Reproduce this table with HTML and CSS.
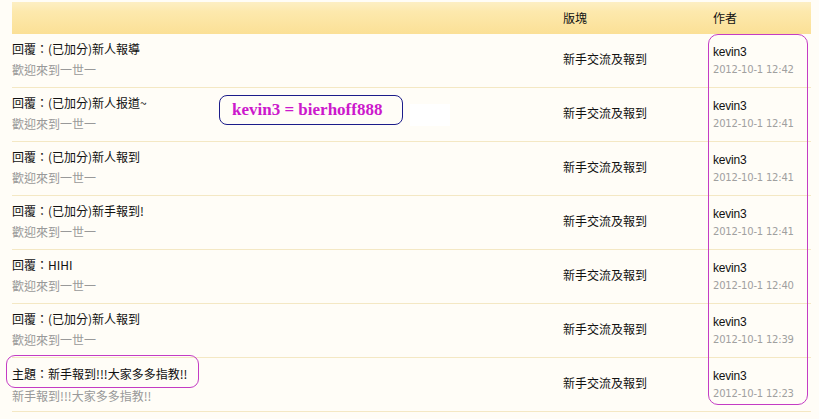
FILE: index.html
```html
<!DOCTYPE html>
<html>
<head>
<meta charset="utf-8">
<link rel="stylesheet" href="styles.css">
</head>
<body>
<div class="page">
  <div class="table">
    <div class="head">
      <div class="c1"></div>
      <div class="c2">版塊</div>
      <div class="c3">作者</div>
    </div>
    <div class="row">
      <div class="c1"><div class="t">回覆：(已加分)新人報導</div><div class="s">歡迎來到一世一</div></div>
      <div class="c2">新手交流及報到</div>
      <div class="c3"><div class="au">kevin3</div><div class="dt">2012-10-1 12:42</div></div>
    </div>
    <div class="row">
      <div class="c1"><div class="t">回覆：(已加分)新人报道~</div><div class="s">歡迎來到一世一</div></div>
      <div class="c2">新手交流及報到</div>
      <div class="c3"><div class="au">kevin3</div><div class="dt">2012-10-1 12:41</div></div>
    </div>
    <div class="row">
      <div class="c1"><div class="t">回覆：(已加分)新人報到</div><div class="s">歡迎來到一世一</div></div>
      <div class="c2">新手交流及報到</div>
      <div class="c3"><div class="au">kevin3</div><div class="dt">2012-10-1 12:41</div></div>
    </div>
    <div class="row">
      <div class="c1"><div class="t">回覆：(已加分)新手報到!</div><div class="s">歡迎來到一世一</div></div>
      <div class="c2">新手交流及報到</div>
      <div class="c3"><div class="au">kevin3</div><div class="dt">2012-10-1 12:41</div></div>
    </div>
    <div class="row">
      <div class="c1"><div class="t">回覆：HIHI</div><div class="s">歡迎來到一世一</div></div>
      <div class="c2">新手交流及報到</div>
      <div class="c3"><div class="au">kevin3</div><div class="dt">2012-10-1 12:40</div></div>
    </div>
    <div class="row">
      <div class="c1"><div class="t">回覆：(已加分)新人報到</div><div class="s">歡迎來到一世一</div></div>
      <div class="c2">新手交流及報到</div>
      <div class="c3"><div class="au">kevin3</div><div class="dt">2012-10-1 12:39</div></div>
    </div>
    <div class="row last">
      <div class="c1"><div class="t">主題：新手報到!!!大家多多指教!!</div><div class="s">新手報到!!!大家多多指教!!</div></div>
      <div class="c2">新手交流及報到</div>
      <div class="c3"><div class="au">kevin3</div><div class="dt">2012-10-1 12:23</div></div>
    </div>
  </div>
  <div class="mark-author"></div>
  <div class="mark-topic"></div>
  <div class="note">kevin3 = bierhoff888</div>
  <div class="patch"></div>
</div>
</body>
</html>
```
FILE: styles.css
```css
html, body {
  margin: 0;
  padding: 0;
  background: #fffdf7;
}
.page {
  position: relative;
  width: 819px;
  height: 419px;
  overflow: hidden;
  font-family: "Noto Sans CJK TC", "Liberation Sans", sans-serif;
  font-size: 12px;
  color: #111;
}
.table {
  margin-left: 12px;
  width: 799px;
  padding-top: 2px;
}
.head, .row {
  display: grid;
  grid-template-columns: 551px 150px 98px;
}
.head {
  height: 31px;
  align-items: center;
  background: linear-gradient(#fdefc4 0%, #fde9ad 30%, #fbe096 100%);
  line-height: 14px;
  padding-bottom: 1px;
}
.row {
  height: 53px;
  border-bottom: 1px solid #f4e8c4;
  box-sizing: content-box;
}
.row .c1 {
  padding-top: 8px;
}
.t {
  line-height: 14px;
  height: 14px;
  white-space: nowrap;
}
.s {
  margin-top: 7px;
  line-height: 14px;
  color: #999;
  white-space: nowrap;
}
.row .c2 {
  align-self: center;
  line-height: 14px;
  margin-top: -3px;
}
.row .c3 {
  padding-top: 11px;
}
.au {
  font-family: "Liberation Sans", sans-serif;
  font-size: 12px;
  line-height: 14px;
  letter-spacing: -0.2px;
}
.dt {
  margin-top: 4px;
  font-family: "DejaVu Sans", sans-serif;
  font-size: 10px;
  line-height: 14px;
  color: #a0a0a0;
  letter-spacing: -0.2px;
}
.row.last .c1 {
  padding-top: 9px;
}
.row.last .s {
  margin-top: 8px;
}
.mark-author {
  position: absolute;
  left: 708px;
  top: 34px;
  width: 98px;
  height: 369px;
  border: 1px solid #c43cc4;
  border-radius: 10px;
}
.mark-topic {
  position: absolute;
  left: 6px;
  top: 355px;
  width: 191px;
  height: 31px;
  border: 1px solid #c43cc4;
  border-radius: 9px;
}
.note {
  position: absolute;
  left: 219px;
  top: 95px;
  width: 170px;
  height: 28px;
  border: 1px solid #1c1c8a;
  border-radius: 8px;
  font-family: "Liberation Serif", serif;
  font-weight: bold;
  font-size: 17px;
  line-height: 28px;
  color: #cc18cc;
  padding-left: 12px;
  box-sizing: content-box;
  white-space: nowrap;
}
.patch {
  position: absolute;
  left: 410px;
  top: 104px;
  width: 40px;
  height: 22px;
  background: #ffffff;
}
```
